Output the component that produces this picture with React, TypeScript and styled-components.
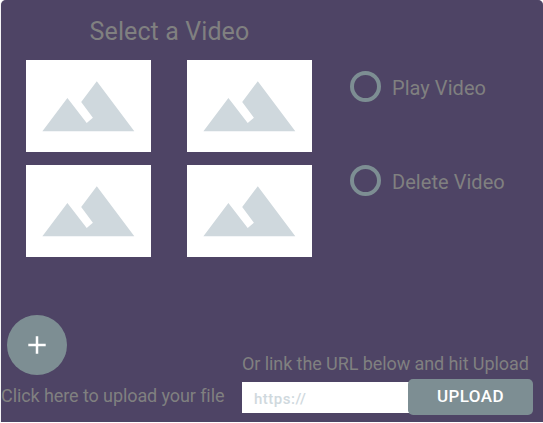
import React from "react";
import styled, { createGlobalStyle } from "styled-components";

const GlobalStyle = createGlobalStyle`
  * { box-sizing: border-box; }
  html, body { margin: 0; background: #fff; overflow: hidden; }
  body { font-family: Roboto, "Liberation Sans", sans-serif; color: #808080; }
`;

const Panel = styled.main`
  width: 542px;
  height: 422px;
  margin-left: 1px;
  background: #4e4465;
  border-radius: 5px 5px 0 0;
  box-shadow: 0 0 1px rgba(78, 68, 101, 0.6);
  display: flex;
  flex-direction: column;
  justify-content: space-between;
`;

const Chooser = styled.section`
  display: flex;
  padding-left: 24.6px;
`;

const Library = styled.div`
  width: 286.4px;
`;

const Label = styled.div<{ $size: number; $spacing?: number; $line: number }>`
  font-size: ${(p) => p.$size}px;
  line-height: ${(p) => p.$line}px;
  letter-spacing: ${(p) => p.$spacing ?? 0}px;
  white-space: nowrap;
`;

const Title = styled.h1`
  margin: 0;
  height: 60px;
  padding: 17px 0 0 64px;
  font-size: 25px;
  font-weight: 400;
  line-height: 30px;
  letter-spacing: 0.1px;
  white-space: nowrap;
`;

const Thumbnails = styled.div`
  display: grid;
  grid-template-columns: 125.2px 125px;
  justify-content: space-between;
  row-gap: 13px;
`;

const Thumbnail = styled.button`
  display: block;
  height: 92px;
  padding: 0;
  border: 0;
  background: #fff;
  svg { display: block; }
`;

const Actions = styled.div`
  display: flex;
  flex-direction: column;
  gap: 63px;
  padding: 71px 0 0 38px;
`;

const Action = styled.label`
  display: flex;
  align-items: center;
  gap: 11px;
  height: 31px;
`;

const Radio = styled.input`
  appearance: none;
  width: 31px;
  height: 31px;
  margin: 0;
  border: 4px solid #7d8e93;
  border-radius: 50%;
`;

const ActionText = styled(Label)`
  padding-top: 3px;
`;

const Footer = styled.section`
  display: flex;
  justify-content: space-between;
  align-items: flex-end;
  padding-right: 10px;
`;

const FilePicker = styled.div`
  height: 107px;
`;

const AddButton = styled.button`
  display: flex;
  align-items: center;
  justify-content: center;
  width: 60px;
  height: 60px;
  margin: 0 0 10px 6px;
  padding: 0;
  border: 0;
  border-radius: 50%;
  background: #7d8e93;
`;

const LinkForm = styled.div`
  width: 291px;
  height: 69px;
`;

const UrlRow = styled.div`
  display: flex;
  align-items: center;
  height: 36px;
  margin-top: 4px;
`;

const UrlInput = styled.input`
  width: 170px;
  height: 31px;
  margin-right: -4px;
  padding: 4px 0 0 12px;
  border: 0;
  border-radius: 0;
  background: #fff;
  font: 500 15px Roboto, sans-serif;
  letter-spacing: 0.5px;
  &::placeholder { color: #d0d9de; opacity: 1; }
`;

const UploadButton = styled.button`
  position: relative;
  width: 125px;
  height: 36px;
  padding: 0 0 2px;
  border: 0;
  border-radius: 5px;
  background: #7d8e93;
  color: #fff;
  font: 500 17px Roboto, sans-serif;
  letter-spacing: 0.4px;
`;

const Mountains = () => (
  <svg width="125" height="92" viewBox="0 0 125 92">
    <path
      d="M16.4 71.2 41.4 38 60.7 63 66.9 57.8 55.2 42 70.8 21.2 108.3 71.2Z"
      fill="#cfd8dd"
    />
  </svg>
);

const Plus = () => (
  <svg width="18" height="18" viewBox="0 0 18 18">
    <path d="M9 0.3V17.7M0.3 9H17.7" stroke="#fff" strokeWidth="2.5" />
  </svg>
);

export default function App() {
  return (
    <>
      <GlobalStyle />
      <Panel>
        <Chooser>
          <Library>
            <Title>Select a Video</Title>
            <Thumbnails>
              {[1, 2, 3, 4].map((n) => (
                <Thumbnail key={n} aria-label={`Video ${n}`}>
                  <Mountains />
                </Thumbnail>
              ))}
            </Thumbnails>
          </Library>
          <Actions>
            <Action>
              <Radio type="radio" name="action" />
              <ActionText $size={20} $line={24} $spacing={0.05}>Play Video</ActionText>
            </Action>
            <Action>
              <Radio type="radio" name="action" />
              <ActionText $size={20} $line={24} $spacing={0.05}>Delete Video</ActionText>
            </Action>
          </Actions>
        </Chooser>
        <Footer>
          <FilePicker>
            <AddButton aria-label="Add file">
              <Plus />
            </AddButton>
            <Label $size={18} $line={22} $spacing={-0.09}>Click here to upload your file</Label>
          </FilePicker>
          <LinkForm>
            <Label $size={18} $line={22} $spacing={-0.08}>Or link the URL below and hit Upload</Label>
            <UrlRow>
              <UrlInput placeholder="https://" />
              <UploadButton>UPLOAD</UploadButton>
            </UrlRow>
          </LinkForm>
        </Footer>
      </Panel>
    </>
  );
}
